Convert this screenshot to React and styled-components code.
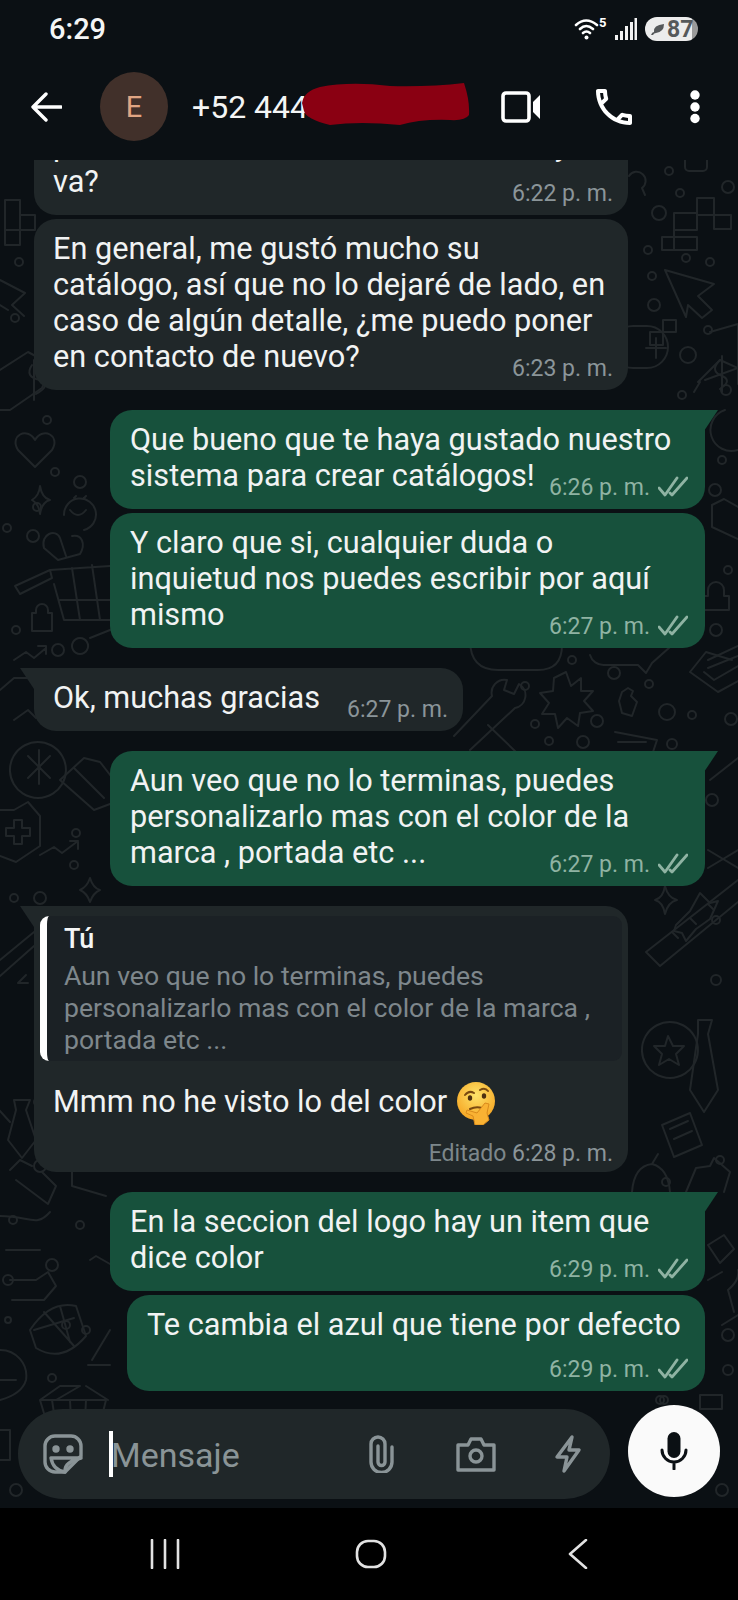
import React from "react";
import styled, { createGlobalStyle } from "styled-components";
import { MdOutlineCall } from "react-icons/md";

const Global = createGlobalStyle`
  html, body { margin: 0; padding: 0; background: #0b1014; }
  * { box-sizing: border-box; }
`;

const Phone = styled.div`
  width: 738px;
  height: 1600px;
  display: flex;
  flex-direction: column;
  background: #0b1014;
  font-family: Roboto, "Liberation Sans", sans-serif;
  color: #f1f3f3;
  overflow: hidden;
`;

const StatusBar = styled.div`
  height: 58px;
  flex: none;
  display: flex;
  align-items: center;
  padding: 0 40px 0 49px;
  font-size: 29px;
  font-weight: 500;
`;
const StatusTime = styled.span`
  flex: 1;
  color: #f4f5f5;
`;
const SignalIcon = styled.svg`
  margin-left: 6px;
  fill: #f2f2f2;
`;
const Battery = styled.div`
  width: 53px;
  height: 24px;
  margin-left: 7px;
  border-radius: 12px;
  background: linear-gradient(90deg, #ececec 0 88%, #9a9a9a 88%);
  display: flex;
  align-items: center;
  padding-left: 6px;
  gap: 3px;
  color: #55585a;
  font-size: 23px;
  font-weight: 700;
`;

const Header = styled.header`
  height: 102px;
  flex: none;
  display: flex;
  align-items: center;
  padding: 0 0 5px 31px;
  position: relative;
`;
const Avatar = styled.div`
  width: 68px;
  height: 69px;
  margin-left: 38px;
  border-radius: 50%;
  background: #41302a;
  color: #e0a583;
  display: flex;
  align-items: center;
  justify-content: center;
  font-size: 29px;
`;
const Title = styled.div`
  flex: 1;
  margin-left: 24px;
  font-size: 32px;
  color: #f4f5f5;
`;
const Scribble = styled.svg`
  position: absolute;
  left: 300px;
  top: 23px;
  filter: blur(0.7px);
`;
const HeaderIcon = styled.div`
  display: flex;
  align-items: center;
  justify-content: center;
  width: ${(p) => p.$w}px;
  margin-right: ${(p) => p.$mr}px;
  color: #fff;
`;
const CallGlyph = styled(MdOutlineCall)`
  margin: -5px;
  flex: none;
`;

const Chat = styled.main`
  flex: 1;
  min-height: 0;
  position: relative;
  display: flex;
  flex-direction: column;
  overflow: hidden;
`;
const Wallpaper = styled.svg`
  position: absolute;
  left: 0;
  top: 0;
  fill: none;
  stroke: #212629;
  stroke-width: 2;
  stroke-linejoin: round;
  stroke-linecap: round;
`;
const Messages = styled.div`
  flex: 1;
  min-height: 0;
  overflow: hidden;
  position: relative;
  display: flex;
  flex-direction: column;
  justify-content: flex-end;
  padding: 0 33px 14px 34px;
`;
const Bubble = styled.div`
  position: relative;
  flex: none;
  width: ${(p) => p.$w}px;
  align-self: ${(p) => (p.$out ? "flex-end" : "flex-start")};
  margin-top: ${(p) => (p.$tail ? 20 : 4)}px;
  padding: ${(p) => (p.$reply ? "10px 6px 6px" : p.$out ? "12px 17px 9px 20px" : "12px 15px 9px 19px")};
  border-radius: 22px;
  background: ${(p) => (p.$out ? "#17513c" : "#202729")};
  ${(p) =>
    p.$tail &&
    (p.$out
      ? `border-top-right-radius: 0;`
      : `border-top-left-radius: 0;`)}
  &::before {
    content: "";
    display: ${(p) => (p.$tail ? "block" : "none")};
    position: absolute;
    top: 0;
    ${(p) => (p.$out ? "right: -13px;" : "left: -14px;")}
    width: 14px;
    height: 21px;
    background: inherit;
    clip-path: ${(p) =>
      p.$out
        ? "polygon(0 0, 100% 0, 0 100%)"
        : "polygon(0 0, 100% 0, 100% 100%)"};
  }
`;
const Text = styled.div`
  font-size: 30.7px;
  line-height: 36px;
  white-space: pre-line;
`;
const Meta = styled.div`
  display: flex;
  justify-content: flex-end;
  align-items: center;
  gap: 8px;
  height: 26px;
  margin-top: ${(p) => p.$mt}px;
  font-size: 23px;
  color: ${(p) => (p.$out ? "#8fb3a3" : "#8b9599")};
`;
const Edited = styled.span`
  color: #7d878b;
`;
const Quote = styled.div`
  border-left: 7px solid #fff;
  border-radius: 9px;
  background: #1b2125;
  padding: 7px 14px 5px 17px;
  color: #7e878c;
  font-size: 26.6px;
  line-height: 32px;
`;
const QuoteName = styled.div`
  color: #f4f5f5;
  font-weight: 500;
  font-size: 27px;
  margin-bottom: 5px;
`;
const ReplyBody = styled.div`
  margin: 23px 9px 0 13px;
`;
const EmojiIcon = styled.svg`
  vertical-align: middle;
  margin: -6px 0 -4px 0;
`;

const Composer = styled.div`
  flex: none;
  position: relative;
  display: flex;
  align-items: flex-start;
  gap: 18px;
  padding: 0 18px 9px 18px;
`;
const InputPill = styled.div`
  flex: 1;
  height: 90px;
  margin-top: 4px;
  border-radius: 45px;
  background: #202729;
  display: flex;
  align-items: center;
  padding-left: 25px;
  color: #8a9497;
`;
const Caret = styled.span`
  width: 4px;
  height: 46px;
  margin-left: 26px;
  background: #fff;
`;
const Placeholder = styled.span`
  flex: 1;
  font-size: 34px;
  margin: 2px 0 0 -2px;
`;
const PillIcon = styled.svg`
  flex: none;
  margin-right: ${(p) => p.$mr || 0}px;
  fill: none;
  stroke: #8a9497;
  stroke-width: 3.4;
  stroke-linejoin: round;
  stroke-linecap: round;
`;
const MicButton = styled.div`
  flex: none;
  width: 92px;
  height: 92px;
  border-radius: 50%;
  background: #fafafa;
  display: flex;
  align-items: center;
  justify-content: center;
`;

const NavBar = styled.nav`
  height: 92px;
  flex: none;
  background: #000;
  padding-top: 31px;
  display: flex;
  align-items: flex-start;
`;
const NavIcon = styled.svg`
  margin-left: ${(p) => p.$ml}px;
  fill: none;
  stroke: #e2e2e2;
  stroke-width: 2.6;
  stroke-linecap: round;
  stroke-linejoin: round;
`;

const circles = [
  [669, 11, 4], [680, 33, 4], [728, 27, 6], [659, 53, 7], [648, 90, 4], [686, 98, 4], [710, 102, 4], [652, 116, 4],
  [654, 145, 6], [708, 170, 4], [688, 195, 8], [682, 235, 4],
  [19, 102, 4], [15, 158, 4], [47, 260, 4], [55, 312, 4], [80, 322, 6], [37, 347, 4], [7, 368, 4], [33, 376, 6],
  [58, 490, 6], [16, 470, 4], [76, 673, 4], [74, 705, 4], [40, 738, 6], [14, 738, 4],
  [38, 942, 4], [13, 1060, 4], [52, 1105, 6], [66, 1165, 4], [86, 1170, 4], [52, 1218, 4], [8, 1160, 3],
  [572, 500, 4], [614, 513, 6], [649, 524, 4], [525, 526, 4], [667, 552, 8], [692, 555, 4], [731, 559, 6],
  [535, 564, 4], [597, 561, 6], [549, 581, 4], [583, 582, 6], [672, 584, 5],
  [716, 760, 4], [716, 820, 5], [720, 1000, 4], [728, 1175, 6], [666, 1022, 4],
  [722, 1330, 6], [664, 1240, 4], [646, 1190, 5], [660, 1240, 4],
  [715, 330, 6], [728, 410, 4], [716, 470, 6], [726, 230, 5], [722, 300, 4], [712, 640, 6], [728, 1210, 5],
  [40, 1006, 6], [8, 1120, 5], [80, 1065, 4], [16, 1330, 6], [76, 960, 4],
];
const doodles = [
  "M685 0 v7 a4 4 0 0 0 4 4 h14 a4 4 0 0 0 4 -4 v-7",
  "M642 28 a9 9 0 1 0 -13 -12 M642 28 l3 7",
  "M697 38 h17 v17 h-17 z M714 55 h17 v14 h-17 z M674 53 h23 v17 h-23 z M662 77 h12 v13 h-12 z M674 77 h23 v13 h-23 z M674 53 v24",
  "M665 110 L714 124 L698 136 L712 150 L702 158 L688 145 L686 157 Z",
  "M650 172 h13 v13 h-13 z M663 160 h13 v12 h-13 z",
  "M633 166 h14 a20 20 0 0 1 0 42 h-14 a20 20 0 0 1 0 -42 z M656 178 v20 M646 188 h20",
  "M698 222 l22 -22 l18 8 M694 232 l6 -10 M710 172 l28 -8 v60",
  "M720 200 q-10 10 0 15 q14 5 0 14 M722 196 v36",
  "M5 40 h15 v15 h15 v15 h-15 v-15 M5 40 v30 h15 v15 h-15 v-15",
  "M0 120 L25 133 L12 145 L24 156 M0 145 L8 150",
  "M0 210 L28 192 L52 205 L42 228 L10 250 L0 250",
  "M32 205 q-8 12 8 15 q12 5 -4 14 M34 200 v40",
  "M35 280 c-8 -14 -26 -4 -17 10 l17 17 l17 -17 c9 -14 -9 -24 -17 -10 z",
  "M32 340 q7 -4 8 -14 q2 12 10 14 q-8 2 -10 14 q-1 -10 -8 -14 z",
  "M64 355 a16 16 0 1 1 20 15 M70 350 q8 10 16 0 M74 338 l2 -2 M84 338 l2 -2",
  "M60 378 c-4 -10 -20 -4 -16 10 l14 12 l22 -6 c6 -10 2 -20 -8 -18 M60 378 l6 18",
  "M15 426 L50 410 L52 418 L20 434 Z M50 410 l60 -4 M54 424 l10 36 h46 M60 440 h50 M72 408 l8 52 M92 405 l8 55",
  "M36 450 a 6 6 0 0 1 12 0 v3 h4 v18 h-20 v-18 h4 z",
  "M80 478 a8 8 0 1 0 0.1 0 z M90 478 l20 -8",
  "M14 500 l12 -8 l8 6 l12 -10 M38 486 h8 v8",
  "M0 530 l14 -12 h18 M14 560 l14 -10 l8 8",
  "M725 250 a20 20 0 1 0 13 40 M705 220 l33 -12",
  "M712 345 l12 -6 l14 8 M712 345 v22 l26 12",
  "M708 430 a8 8 0 0 1 16 0 v6 h5 v14 h-26 v-14 h5 z",
  "M708 500 l30 -14 M708 508 l30 -12",
  "M710 620 l28 -22",
  "M708 690 l30 18 M708 708 l30 -18",
  "M708 1085 l16 -10 l10 14 l-14 14 z M708 1120 l14 -8",
  "M728 1130 q12 -10 10 -20 M728 1130 l6 22 M722 1165 l16 -10",
  "M700 1235 h22 v14 h-22 z",
  "M38 582 a28 28 0 1 1 -0.1 0 z M28 596 l22 22 M50 596 l-22 22 M39 590 v34",
  "M0 650 h14 l14 -8 l12 14 v30 l-24 16 l-16 -6 M6 668 h8 v-8 h8 v8 h8 v8 h-8 v8 h-8 v-8 h-8 z",
  "M60 620 l24 -22 l16 4 l14 18 M60 620 l34 30 l16 -6 M74 608 l30 30",
  "M40 695 l14 -8 l8 6 l16 -12 M70 681 h8 v8",
  "M80 730 q7 -3 10 -12 q3 10 10 12 q-7 3 -10 12 q-3 -9 -10 -12 z",
  "M0 800 l34 -28 M0 816 l34 -30",
  "M26 815 l-8 8 l10 0",
  "M14 940 h16 l-4 10 l10 30 l-14 18 l-14 -18 l8 -30 z M10 962 l-18 -20",
  "M10 1010 l10 -10 l12 6 M16 1020 l32 24 l8 -18 l-14 -14",
  "M0 1056 c30 0 36 12 50 -4 M6 1090 h34",
  "M72 1010 c-4 -10 14 -18 26 -14 l12 4 M72 1010 v16 l34 10",
  "M10 1120 h26 l12 -8 l8 14 l-12 14 l-32 0",
  "M90 1100 l6 -4 l14 8",
  "M30 1170 q20 -30 46 -24 l10 30 q-24 28 -50 12 z M44 1152 l30 34 M34 1170 l40 -12 M60 1146 l10 36",
  "M92 1200 l18 -30 M88 1205 h22",
  "M0 1190 a26 26 0 0 1 26 30 q-4 14 -26 20 M0 1220 h16",
  "M40 1240 l20 -14 h20 l-24 14 M40 1240 l12 40 h44 l10 -40 z M46 1256 h56 M52 1240 l6 40 M70 1240 l2 40 M86 1240 l-2 40 M86 1226 l22 14",
  "M0 1270 h10 v30 h-10",
];
// Doodles drawn in page coordinates: moved up by the height of the bars above the chat.
const pageDoodles = [
  "M470 640 q0 30 28 30 h40 q24 0 24 -25",
  "M566 672 l5 14 l10 -8 l0 13 l12 0 l-9 10 l9 10 l-13 2 l-2 13 l-11 -8 l-9 10 l-3 -14 l-13 0 l7 -11 l-9 -10 l13 -2 l1 -13 z",
  "M470 750 l45 -42 a13 13 0 0 0 4 -24 l-5 10 l-10 -4 l3 -10 a13 13 0 0 0 -15 16 l-38 40",
  "M488 725 l28 27",
  "M622 692 l6 -4 l5 3 l-2 5 l6 6 l-5 14 l-10 -3 l-3 -12 z",
  "M615 732 l42 8 l-4 12 M618 742 h28",
  "M690 672 l16 -20 l26 8 M690 672 l28 20 l22 -12 M704 672 l10 8 l24 -14",
  "M590 655 a14 14 0 0 0 14 10 h34 l8 8 l6 -10 l18 -16",
  "M646 952 l92 -72 M660 966 l78 -64 M646 952 l14 14 M672 932 l6 6 M690 918 l6 6 M708 904 l6 6",
  "M655 900 q8 -2 10 -14 q3 12 12 14 q-9 2 -12 14 q-2 -12 -10 -14 z",
  "M676 925 l14 -14 l10 -18 l10 10 l8 -2 l-8 18 l-14 10 l-10 12 l-4 -8 l-8 -2 z",
  "M698 1020 h14 l-4 14 l10 56 l-14 22 l-14 -22 l8 -56 z",
  "M670 1022 a28 28 0 1 1 -0.1 0 z M668 1036 l5 10 l11 0 l-8 8 l3 11 l-10 -6 l-10 6 l3 -11 l-8 -8 l11 0 z",
  "M662 1125 l28 -12 l12 32 l-28 12 z M670 1129 l18 -8 M674 1139 l18 -8",
  "M632 1192 q2 -26 20 -28 l6 -10 M652 1164 q16 4 18 28",
  "M686 1192 l10 -24 l14 -2 l4 -8 l16 14 l-6 20",
];

const BackIcon = () => (
  <svg width="31" height="30" viewBox="0 0 31 30" fill="none" stroke="#fff" strokeWidth="3.4" strokeLinecap="round" strokeLinejoin="round">
    <path d="M30 15H2M15 2 2 15l13 13" />
  </svg>
);
const VideoIcon = () => (
  <svg width="40" height="32" viewBox="0 0 40 32">
    <rect x="2" y="2" width="26" height="28" rx="3" fill="none" stroke="#fff" strokeWidth="3.6" />
    <path d="M32 11 39 4V28L32 21Z" fill="#fff" />
  </svg>
);
const DotsIcon = () => (
  <svg width="12" height="34" viewBox="0 0 12 34" fill="#fff">
    <circle cx="6" cy="5" r="4.7" />
    <circle cx="6" cy="17" r="4.7" />
    <circle cx="6" cy="28.500" r="4.7" />
  </svg>
);
const Checks = () => (
  <svg width="30" height="22" viewBox="0 0 30 22" fill="none" stroke="#8fb3a3" strokeWidth="2.8" strokeLinecap="round" strokeLinejoin="round">
    <path d="M1 12l6 7L19 2M12 17l2 2L29 2" />
  </svg>
);
const ThinkingEmoji = () => (
  <EmojiIcon width="44" height="44" viewBox="0 0 44 44">
    <defs>
      <radialGradient id="face" cx="50%" cy="35%" r="65%">
        <stop offset="0" stopColor="#fde36a" />
        <stop offset="1" stopColor="#f6a623" />
      </radialGradient>
    </defs>
    <circle cx="21" cy="20" r="19" fill="url(#face)" />
    <path d="M10 14q4-5 9-2M25 9q5-3 8 1" fill="none" stroke="#7a4a10" strokeWidth="2" strokeLinecap="round" />
    <ellipse cx="15" cy="17" rx="2.2" ry="2.8" fill="#4c3010" />
    <ellipse cx="29" cy="15" rx="2.2" ry="2.8" fill="#4c3010" />
    <path d="M15 28q6-3 12-1" fill="none" stroke="#7a4a10" strokeWidth="2" strokeLinecap="round" />
    <path d="M12 29l10 3 8-10 4 1-2 9 2 7-6 5h-8l-2-9-7-3z" fill="#f9b233" stroke="#d98a1c" strokeWidth="1" />
  </EmojiIcon>
);

const MetaRow = ({ out, time, mt, edited }) => (
  <Meta $out={out} $mt={mt}>
    <span>
      {edited && <Edited>Editado </Edited>}
      {time}
    </span>
    {out && <Checks />}
  </Meta>
);

const Msg = ({ out, tail, w, time, mt = -20, children }) => (
  <Bubble $out={out} $tail={tail} $w={w}>
    <Text>{children}</Text>
    <MetaRow out={out} time={time} mt={mt} />
  </Bubble>
);

export default function App() {
  return (
    <Phone>
      <Global />
      <StatusBar>
        <StatusTime>6:29</StatusTime>
        <svg width="34" height="24" viewBox="0 0 34 24" fill="none" stroke="#fff" strokeLinecap="round">
          <path d="M2 8q10-9 21 0M6 12q6-6 13 0M9 16q3.500-3 7 0" strokeWidth="2.6" />
          <circle cx="12.500" cy="20.500" r="2" fill="#fff" stroke="none" />
          <text x="25" y="10" fill="#fff" stroke="none" fontSize="13" fontWeight="700" fontFamily="Roboto">5</text>
        </svg>
        <SignalIcon width="24" height="24" viewBox="0 0 24 24">
          <rect x="1" y="18" width="3" height="5" />
          <rect x="6" y="14" width="3" height="9" />
          <rect x="11" y="9" width="3" height="14" />
          <rect x="16" y="5" width="3" height="18" />
          <rect x="20.500" y="1" width="2.500" height="22" />
        </SignalIcon>
        <Battery>
          <svg width="13" height="11" viewBox="0 0 13 11" fill="#55585a">
            <path d="M0 11q1-3 3-3Q2 1 13 0q0 8-8 9-2 0-3 2z" />
          </svg>
          87
        </Battery>
      </StatusBar>
      <Header>
        <BackIcon />
        <Avatar>E</Avatar>
        <Title>+52 444</Title>
        <Scribble width="170" height="46" viewBox="0 0 170 46">
          <path d="M2 22Q4 10 20 6 50 0 90 5 130 6 164 2 170 20 169 34 165 40 150 39 120 38 100 44 60 40 30 44 6 38 4 30 2 22Z" fill="#8a0012" />
        </Scribble>
        <HeaderIcon $w={40} $mr={54}><VideoIcon /></HeaderIcon>
        <HeaderIcon $w={38} $mr={56}><CallGlyph size={48} /></HeaderIcon>
        <HeaderIcon $w={12} $mr={37}><DotsIcon /></HeaderIcon>
      </Header>
      <Chat>
        <Wallpaper width="738" height="1348" viewBox="0 0 738 1348">
          {doodles.map((d, i) => <path key={i} d={d} />)}
          <g transform="translate(0 -160)">
            {pageDoodles.map((d, i) => <path key={i} d={d} />)}
          </g>
          {circles.map(([x, y, r], i) => <circle key={i} cx={x} cy={y} r={r} />)}
        </Wallpaper>
        <Messages>
          <Msg w={594} time="6:22 p. m.">{"pensaré el tema de ahora en delante y\nva?"}</Msg>
          <Msg w={594} time="6:23 p. m.">
            {"En general, me gustó mucho su\ncatálogo, así que no lo dejaré de lado, en\ncaso de algún detalle, ¿me puedo poner\nen contacto de nuevo?"}
          </Msg>
          <Msg out tail w={595} time="6:26 p. m.">{"Que bueno que te haya gustado nuestro\nsistema para crear catálogos!"}</Msg>
          <Msg out w={595} time="6:27 p. m.">{"Y claro que si, cualquier duda o\ninquietud nos puedes escribir por aquí\nmismo"}</Msg>
          <Msg tail w={429} time="6:27 p. m.">Ok, muchas gracias</Msg>
          <Msg out tail w={595} time="6:27 p. m.">{"Aun veo que no lo terminas, puedes\npersonalizarlo mas con el color de la\nmarca , portada etc ..."}</Msg>
          <Bubble $tail $reply $w={594}>
            <Quote>
              <QuoteName>Tú</QuoteName>
              Aun veo que no lo terminas, puedes
              <br />
              personalizarlo mas con el color de la marca ,
              <br />
              portada etc ...
            </Quote>
            <ReplyBody>
              <Text>Mmm no he visto lo del color <ThinkingEmoji /></Text>
              <MetaRow time="6:28 p. m." mt={19} edited />
            </ReplyBody>
          </Bubble>
          <Msg out tail w={595} time="6:29 p. m.">{"En la seccion del logo hay un item que\ndice color"}</Msg>
          <Msg out w={578} time="6:29 p. m." mt={13}>Te cambia el azul que tiene por defecto</Msg>
        </Messages>
        <Composer>
          <InputPill>
            <PillIcon width="40" height="40" viewBox="0 0 40 40">
              <path d="M12 2h16a10 10 0 0 1 10 10v10L22 38H12A10 10 0 0 1 2 28V12A10 10 0 0 1 12 2Z" />
              <path d="M8 24h30M8 24q2 12 14 14M22 38q-1-10 16-14" />
              <circle cx="13" cy="15" r="2" fill="#8a9497" />
              <circle cx="27" cy="15" r="2" fill="#8a9497" />
            </PillIcon>
            <Caret />
            <Placeholder>Mensaje</Placeholder>
            <PillIcon width="26" height="38" viewBox="0 0 26 38" $mr={61}>
              <path d="M23 12v15a10.500 10.500 0 0 1-21 0V9a7 7 0 0 1 14 0v18a3.500 3.500 0 0 1-7 0V11" />
            </PillIcon>
            <PillIcon width="40" height="36" viewBox="0 0 40 36" $mr={58}>
              <path d="M2 9h10l3-6h10l3 6h10v25H2Z" />
              <circle cx="20" cy="20" r="6" />
            </PillIcon>
            <PillIcon width="28" height="38" viewBox="0 0 28 38" $mr={28}>
              <path d="M18 2 3 22h10L10 36 25 15H15Z" />
            </PillIcon>
          </InputPill>
          <MicButton>
            <svg width="28" height="38" viewBox="0 0 28 38" fill="none" stroke="#0b1014" strokeWidth="3" strokeLinecap="round">
              <rect x="7.500" y="0" width="13" height="26" rx="6.500" fill="#0b1014" stroke="none" />
              <path d="M2 18a12 12 0 0 0 24 0M14 30v7" />
            </svg>
          </MicButton>
        </Composer>
      </Chat>
      <NavBar>
        <NavIcon $ml={150} width="30" height="30" viewBox="0 0 30 30">
          <path d="M2 1v28M15 1v28M28 1v28" />
        </NavIcon>
        <NavIcon $ml={175} width="32" height="30" viewBox="0 0 32 30">
          <rect x="2" y="2" width="28" height="26" rx="11" />
        </NavIcon>
        <NavIcon $ml={180} width="22" height="30" viewBox="0 0 22 30">
          <path d="M19 1 3 15l16 14" />
        </NavIcon>
      </NavBar>
    </Phone>
  );
}
